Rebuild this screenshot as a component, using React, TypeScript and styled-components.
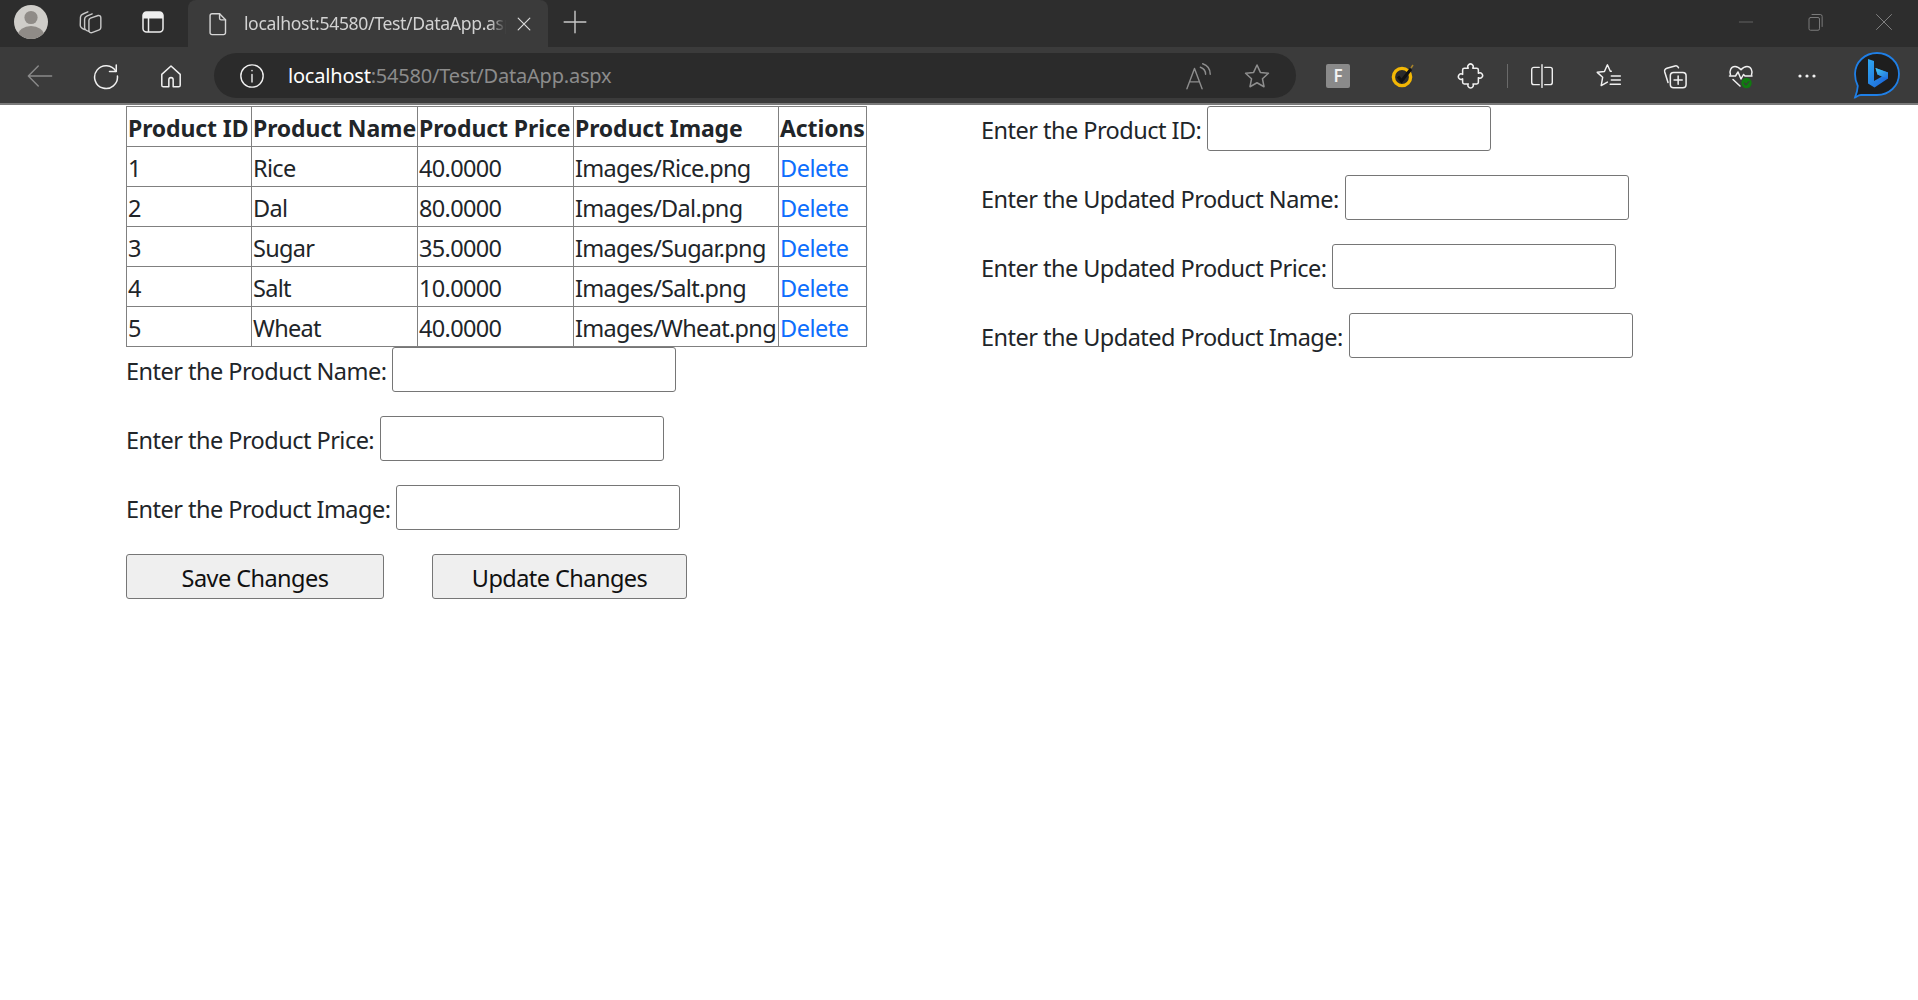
import React from 'react';
import styled, { createGlobalStyle } from 'styled-components';

const Global = createGlobalStyle`
  html, body { margin: 0; padding: 0; background: #fff; }
  body { font-family: "Noto Sans", "Open Sans", sans-serif; color: #212529; }
`;

const TabStrip = styled.div`
  display: flex; height: 47px; background: #2d2d2d; align-items: stretch;
  > * { box-sizing: border-box; padding-bottom: 3px; }
`;
const Slot = styled.div<{ $w: number; $ml?: number }>`
  width: ${p => p.$w}px; margin-left: ${p => p.$ml ?? 0}px; flex: none;
  display: flex; align-items: center; justify-content: center;
`;
const Spacer = styled.div`flex: 1;`;
const Tab = styled.div`
  width: 360px; flex: none; background: #3b3b3b; border-radius: 8px 8px 0 0;
  display: flex; align-items: center; padding: 0 12px 0 17px;
`;
const TabTitle = styled.div`
  margin-left: 13px; width: 263px; padding-bottom: 2px; overflow: hidden; white-space: nowrap;
  font-size: 17.6px; letter-spacing: -0.35px; color: #d2d2d2;
  -webkit-mask-image: linear-gradient(to right, #000 94%, transparent 100%);
  mask-image: linear-gradient(to right, #000 94%, transparent 100%);
`;
const Toolbar = styled.div`
  display: flex; height: 58px; box-sizing: border-box; padding: 6px 0 5px; align-items: center; background: #3b3b3b;
  border-bottom: 2px solid #7a7a7a;
`;
const Address = styled.div`
  width: 1082px; margin-left: 4px; height: 45px; flex: none; background: #2b2b2b; border-radius: 23px;
  display: flex; align-items: center;
`;
const Url = styled.div`
  margin-left: 3px; font-size: 20px; letter-spacing: -0.2px; white-space: nowrap; color: #8c8c8c;
  b { font-weight: 400; color: #fff; }
`;
const Divider = styled.div`width: 1px; height: 24px; margin-left: 1px; background: #6a6a6a; flex: none;`;

const Main = styled.main`
  display: flex; padding: 1px 0 0 126px; align-items: flex-start;
`;
const Left = styled.section`width: 855px; flex: none;`;
const Right = styled.section`flex: 1; display: flex; flex-direction: column;`;

const Table = styled.table`
  border-collapse: collapse; table-layout: fixed; width: 740px;
`;
const Th = styled.th<{ $w: number }>`
  width: ${p => p.$w}px; box-sizing: border-box; height: 40px; padding: 2px 0 0 1px; border: 1px solid #808080;
  text-align: left; font-weight: 700; white-space: nowrap; overflow: hidden; font-size: 23px; letter-spacing: -0.12px;
`;
const Td = styled.td`
  height: 40px; box-sizing: border-box; padding: 2px 0 0 1px; border: 1px solid #808080; white-space: nowrap; overflow: hidden;
  font-size: 23.5px; letter-spacing: -0.68px;
`;
const DeleteLink = styled.a`color: #0d6efd; text-decoration: none; cursor: pointer; letter-spacing: -0.5px;`;

const Field = styled.div`
  display: flex; align-items: center; height: 45px; margin-bottom: 24px;
`;
const Label = styled.label`
  font-size: 23.5px; letter-spacing: -0.53px; white-space: nowrap; color: #212529;
  padding-top: 3px;
`;
const Input = styled.input`
  width: 284px; height: 45px; box-sizing: border-box; margin-left: 6px; background: #fff;
  border: 1px solid #767676; border-radius: 3px; padding: 0 4px; outline: none;
`;
const Buttons = styled.div`display: flex; gap: 48px; margin-top: 1px;`;
const Button = styled.button<{ $w: number }>`
  width: ${p => p.$w}px; height: 45px; box-sizing: border-box; background: #efefef; color: #111;
  border: 1px solid #767676; border-radius: 3px; font-family: inherit;
  font-size: 23.5px; letter-spacing: -0.55px; padding: 2px 0 0;
`;
const Badge = styled.div`
  width: 24px; height: 24px; border-radius: 2px; background: #8a8a8a; color: #f2f2f2;
  display: flex; align-items: center; justify-content: center; font-size: 17px; font-weight: 600;
`;

const Ic: React.FC<{ s?: number; c?: string; sw?: number; children: React.ReactNode; vb?: number }> = ({ s = 26, c = '#e8e8e8', sw = 1.5, vb = 24, children }) => (
  <svg width={s} height={s} viewBox={`0 0 ${vb} ${vb}`} fill="none" stroke={c} strokeWidth={sw} strokeLinecap="round" strokeLinejoin="round">{children}</svg>
);

const rows = [
  ['1', 'Rice', '40.0000', 'Images/Rice.png'],
  ['2', 'Dal', '80.0000', 'Images/Dal.png'],
  ['3', 'Sugar', '35.0000', 'Images/Sugar.png'],
  ['4', 'Salt', '10.0000', 'Images/Salt.png'],
  ['5', 'Wheat', '40.0000', 'Images/Wheat.png'],
];

export default function App() {
  return (
    <>
      <Global />
      <TabStrip>
        <Slot $w={62}>
          <svg width="34" height="34" viewBox="0 0 34 34">
            <defs><clipPath id="av"><circle cx="17" cy="17" r="17" /></clipPath></defs>
            <circle cx="17" cy="17" r="17" fill="#cfcdc9" />
            <g clipPath="url(#av)" fill="#8f8b87">
              <circle cx="17" cy="12.5" r="6.6" />
              <ellipse cx="17" cy="30" rx="13" ry="9" />
            </g>
          </svg>
        </Slot>
        <Slot $w={56}>
          <Ic s={26} c="#c9c9c9" sw={1.3}>
            <path d="M7 19 C4.5 18 3 17 3 15 L3.2 7.5 C3.3 5.8 4.3 5 5.5 4.6 L10 2.6" />
            <path d="M11 20.5 C8.5 20 7 19 7 17 L7 9.5 C7 8 8 7 9 6.6 L14 4.5" />
            <path d="M11 10.5 C11 9.4 11.6 8.8 12.5 8.4 L19.5 6 C20.8 5.7 22 6.4 22 8 L22 17 C22 18 21.5 18.8 20.5 19.2 L13.8 21.8 C12.4 22.2 11 21.4 11 20 Z" />
          </Ic>
        </Slot>
        <Slot $w={70}>
          <svg width="22" height="22" viewBox="0 0 22 22">
            <rect x="1" y="1" width="20" height="20" rx="3.5" fill="none" stroke="#eee" strokeWidth="1.5" />
            <path d="M1 5 a4 4 0 0 1 4-4 h12 a4 4 0 0 1 4 4 v2.5 H1 Z" fill="#eee" />
            <path d="M6.5 7 V21" stroke="#eee" strokeWidth="1.5" />
          </svg>
        </Slot>
        <Tab>
          <Ic s={26} c="#d6d6d6" sw={1.3}>
            <path d="M6.5 2.5 h7 l5.5 5.5 v12 a1.8 1.8 0 0 1 -1.8 1.8 h-10.7 a1.8 1.8 0 0 1 -1.8 -1.8 v-15.7 a1.8 1.8 0 0 1 1.8 -1.8 z" />
            <path d="M13.5 2.5 v4.2 a1.5 1.5 0 0 0 1.5 1.5 h4" />
          </Ic>
          <TabTitle>localhost:54580/Test/DataApp.aspx</TabTitle>
          <Slot $w={24} $ml={6}>
            <Ic s={20} c="#dcdcdc" sw={1.4}><path d="M5 5 L19 19 M19 5 L5 19" /></Ic>
          </Slot>
        </Tab>
        <Slot $w={54}>
          <Ic s={26} c="#c8c8c8" sw={1.3}><path d="M12 2 V22 M2 12 H22" /></Ic>
        </Slot>
        <Spacer />
        <Slot $w={69}><Ic s={16} c="#7c7c7c" sw={1}><path d="M2 12 H22" /></Ic></Slot>
        <Slot $w={69}>
          <Ic s={18} c="#7c7c7c" sw={1.3}>
            <rect x="4" y="6" width="14" height="17" rx="2" />
            <path d="M8 2 H19 a2.5 2.5 0 0 1 2.5 2.5 V18" />
          </Ic>
        </Slot>
        <Slot $w={69}><Ic s={18} c="#8a8a8a" sw={1.2}><path d="M2 2 L22 22 M22 2 L2 22" /></Ic></Slot>
      </TabStrip>

      <Toolbar>
        <Slot $w={80}><Ic s={28} c="#8a8a8a" sw={1.2}><path d="M22 12 H2 M10.5 3.5 L2 12 L10.5 20.5" /></Ic></Slot>
        <Slot $w={52}>
          <Ic s={28} c="#f0f0f0" sw={1.3}>
            <path d="M20.5 8 A 9.8 9.8 0 1 0 21.8 12" />
            <path d="M20.8 2.5 V8.2 H15" />
          </Ic>
        </Slot>
        <Slot $w={78}>
          <Ic s={26} c="#f0f0f0" sw={1.4}>
            <path d="M10 22 H5 a1.5 1.5 0 0 1 -1.5 -1.5 V10.5 L12 2.8 L20.5 10.5 V20.5 a1.5 1.5 0 0 1 -1.5 1.5 H14 V15.5 a2 2 0 0 0 -4 0 Z" />
          </Ic>
        </Slot>
        <Address>
          <Slot $w={66} $ml={5}>
            <Ic s={26} c="#f0f0f0" sw={1.3}>
              <circle cx="12" cy="12" r="10.3" />
              <path d="M12 10.5 V17.5 M12 6.8 V7.2" />
            </Ic>
          </Slot>
          <Url><b>localhost</b>:54580/Test/DataApp.aspx</Url>
          <Spacer />
          <Slot $w={50}>
            <Ic s={28} c="#8e8e8e" sw={1.2}>
              <path d="M2.5 23 L9 5.5 L15.5 23 M4.8 17 H13.2" />
              <path d="M14 4.5 C17 5.5 18.5 8 18.5 10.5 M16 1.5 C20.5 3 22.5 6.5 22.5 10.5" />
            </Ic>
          </Slot>
          <Slot $w={68}>
            <Ic s={28} c="#8e8e8e" sw={1.3}>
              <path d="M12 2.6 L14.9 8.9 L21.8 9.7 L16.7 14.4 L18 21.2 L12 17.8 L6 21.2 L7.3 14.4 L2.2 9.7 L9.1 8.9 Z" />
            </Ic>
          </Slot>
          <Slot $w={5} />
        </Address>
        <Slot $w={84}>
          <Badge>F</Badge>
        </Slot>
        <Slot $w={46}>
          <svg width="26" height="26" viewBox="0 0 26 26">
            <circle cx="12" cy="14" r="8.6" fill="#2a2a2a" stroke="#f2b705" strokeWidth="3.4" />
            <path d="M8 13.5 L11.5 18 L21 6" fill="none" stroke="#111" strokeWidth="3" />
            <path d="M21 5 L23 2" stroke="#a8842a" strokeWidth="1.5" />
          </svg>
        </Slot>
        <Slot $w={72} $ml={8}>
          <Ic s={27} c="#f0f0f0" sw={1.35}>
            <path d="M10 5.5 A2.4 2.4 0 1 1 14 5.5 H17.5 a1.5 1.5 0 0 1 1.5 1.5 V10 A2.4 2.4 0 1 1 19 14 V18 a1.5 1.5 0 0 1 -1.5 1.5 H14.2 A2.4 2.4 0 1 1 10 19.5 H6.5 a1.5 1.5 0 0 1 -1.5 -1.5 V15 A2.4 2.4 0 1 1 5 11 V7 a1.5 1.5 0 0 1 1.5 -1.5 Z" />
          </Ic>
        </Slot>
        <Divider />
        <Slot $w={68}>
          <Ic s={26} c="#f0f0f0" sw={1.3}>
            <path d="M9.5 4 H4.5 a2 2 0 0 0 -2 2 V18 a2 2 0 0 0 2 2 H9.5" />
            <path d="M14.5 4 H19.5 a2 2 0 0 1 2 2 V18 a2 2 0 0 1 -2 2 H14.5" />
            <path d="M12 1.5 V22.5" />
          </Ic>
        </Slot>
        <Slot $w={64}>
          <Ic s={27} c="#f0f0f0" sw={1.3}>
            <path d="M14.5 8.2 H13.6 L11 2.5 L8.4 8.4 L2 9.2 L6.8 13.6 L5.5 21 L11 17.8" />
            <path d="M14.5 12.5 H22.5 M14.5 16 H22.5 M13.5 19.8 H22.5" />
          </Ic>
        </Slot>
        <Slot $w={70}>
          <Ic s={28} c="#f0f0f0" sw={1.3}>
            <path d="M6 17.5 L3.2 8.5 C2.8 7 3.5 5.8 5 5.4 L12 3.4 C13.5 3 14.5 3.6 15 5" />
            <rect x="8" y="9" width="13.5" height="13" rx="2.8" />
            <path d="M14.7 12 V19 M11.2 15.5 H18.2" />
          </Ic>
        </Slot>
        <Slot $w={62}>
          <svg width="28" height="28" viewBox="0 0 28 28" fill="none" stroke="#f0f0f0" strokeWidth="1.5" strokeLinecap="round" strokeLinejoin="round">
            <path d="M3.5 13 C2 9 4 4.5 8 4.5 C10.5 4.5 12.5 6 14 7.8 C15.5 6 17.5 4.5 20 4.5 C24 4.5 26 9 24.5 13" />
            <path d="M2.5 14 H8.5 L11 10 L14 17 L16.5 12.5 L18 14 H25" />
            <path d="M6 17.5 L13 24" />
            <circle cx="19.5" cy="21" r="5.2" fill="#107c10" stroke="none" />
            <path d="M17.3 21 L19 22.8 L22 19.5" stroke="#3a3a3a" strokeWidth="1.1" />
          </svg>
        </Slot>
        <Slot $w={70}>
          <svg width="20" height="6" viewBox="0 0 20 6" fill="#f0f0f0">
            <circle cx="3" cy="3" r="1.6" /><circle cx="10" cy="3" r="1.6" /><circle cx="17" cy="3" r="1.6" />
          </svg>
        </Slot>
        <Slot $w={70}>
          <svg width="48" height="50" viewBox="0 0 48 50">
            <defs>
              <linearGradient id="bingA" x1="0" y1="0" x2="1" y2="1">
                <stop offset="0" stopColor="#2fa8f0" /><stop offset="1" stopColor="#1a5fd8" />
              </linearGradient>
              <linearGradient id="bingB" x1="0" y1="0" x2="1" y2="1">
                <stop offset="0" stopColor="#45c8f0" /><stop offset="1" stopColor="#1e6fe0" />
              </linearGradient>
            </defs>
            <path d="M24 2 C36 2 46 11 46 23 C46 35 36 44 24 44 H8 C4.5 44 3.5 46.5 2 46.5 C3 44 4.5 40 4.8 35 C3 31.5 2 27.5 2 23 C2 11 12 2 24 2 Z" fill="#1e1e1e" stroke="#1f7fe6" strokeWidth="1.8" />
            <path d="M15 8 L21 10 V30 L29 25.5 L24.5 23.5 L22.5 17 L35 21.5 V27.5 L21.5 36.5 L15 32.5 Z" fill="url(#bingA)" />
            <path d="M22.5 17 L35 21.5 V27.5 L29 25.5 L24.5 23.5 Z" fill="url(#bingB)" />
          </svg>
        </Slot>
      </Toolbar>

      <Main>
        <Left>
          <Table>
            <thead>
              <tr>
                <Th $w={125}>Product ID</Th>
                <Th $w={166}>Product Name</Th>
                <Th $w={156}>Product Price</Th>
                <Th $w={205}>Product Image</Th>
                <Th $w={88}>Actions</Th>
              </tr>
            </thead>
            <tbody>
              {rows.map(r => (
                <tr key={r[0]}>
                  {r.map((c, i) => <Td key={i}>{c}</Td>)}
                  <Td><DeleteLink>Delete</DeleteLink></Td>
                </tr>
              ))}
            </tbody>
          </Table>
          <Field><Label>Enter the Product Name:</Label><Input /></Field>
          <Field><Label>Enter the Product Price:</Label><Input /></Field>
          <Field><Label>Enter the Product Image:</Label><Input /></Field>
          <Buttons>
            <Button $w={258}>Save Changes</Button>
            <Button $w={255}>Update Changes</Button>
          </Buttons>
        </Left>
        <Right>
          <Field><Label>Enter the Product ID:</Label><Input /></Field>
          <Field><Label>Enter the Updated Product Name:</Label><Input /></Field>
          <Field><Label>Enter the Updated Product Price:</Label><Input /></Field>
          <Field><Label>Enter the Updated Product Image:</Label><Input /></Field>
        </Right>
      </Main>
    </>
  );
}
